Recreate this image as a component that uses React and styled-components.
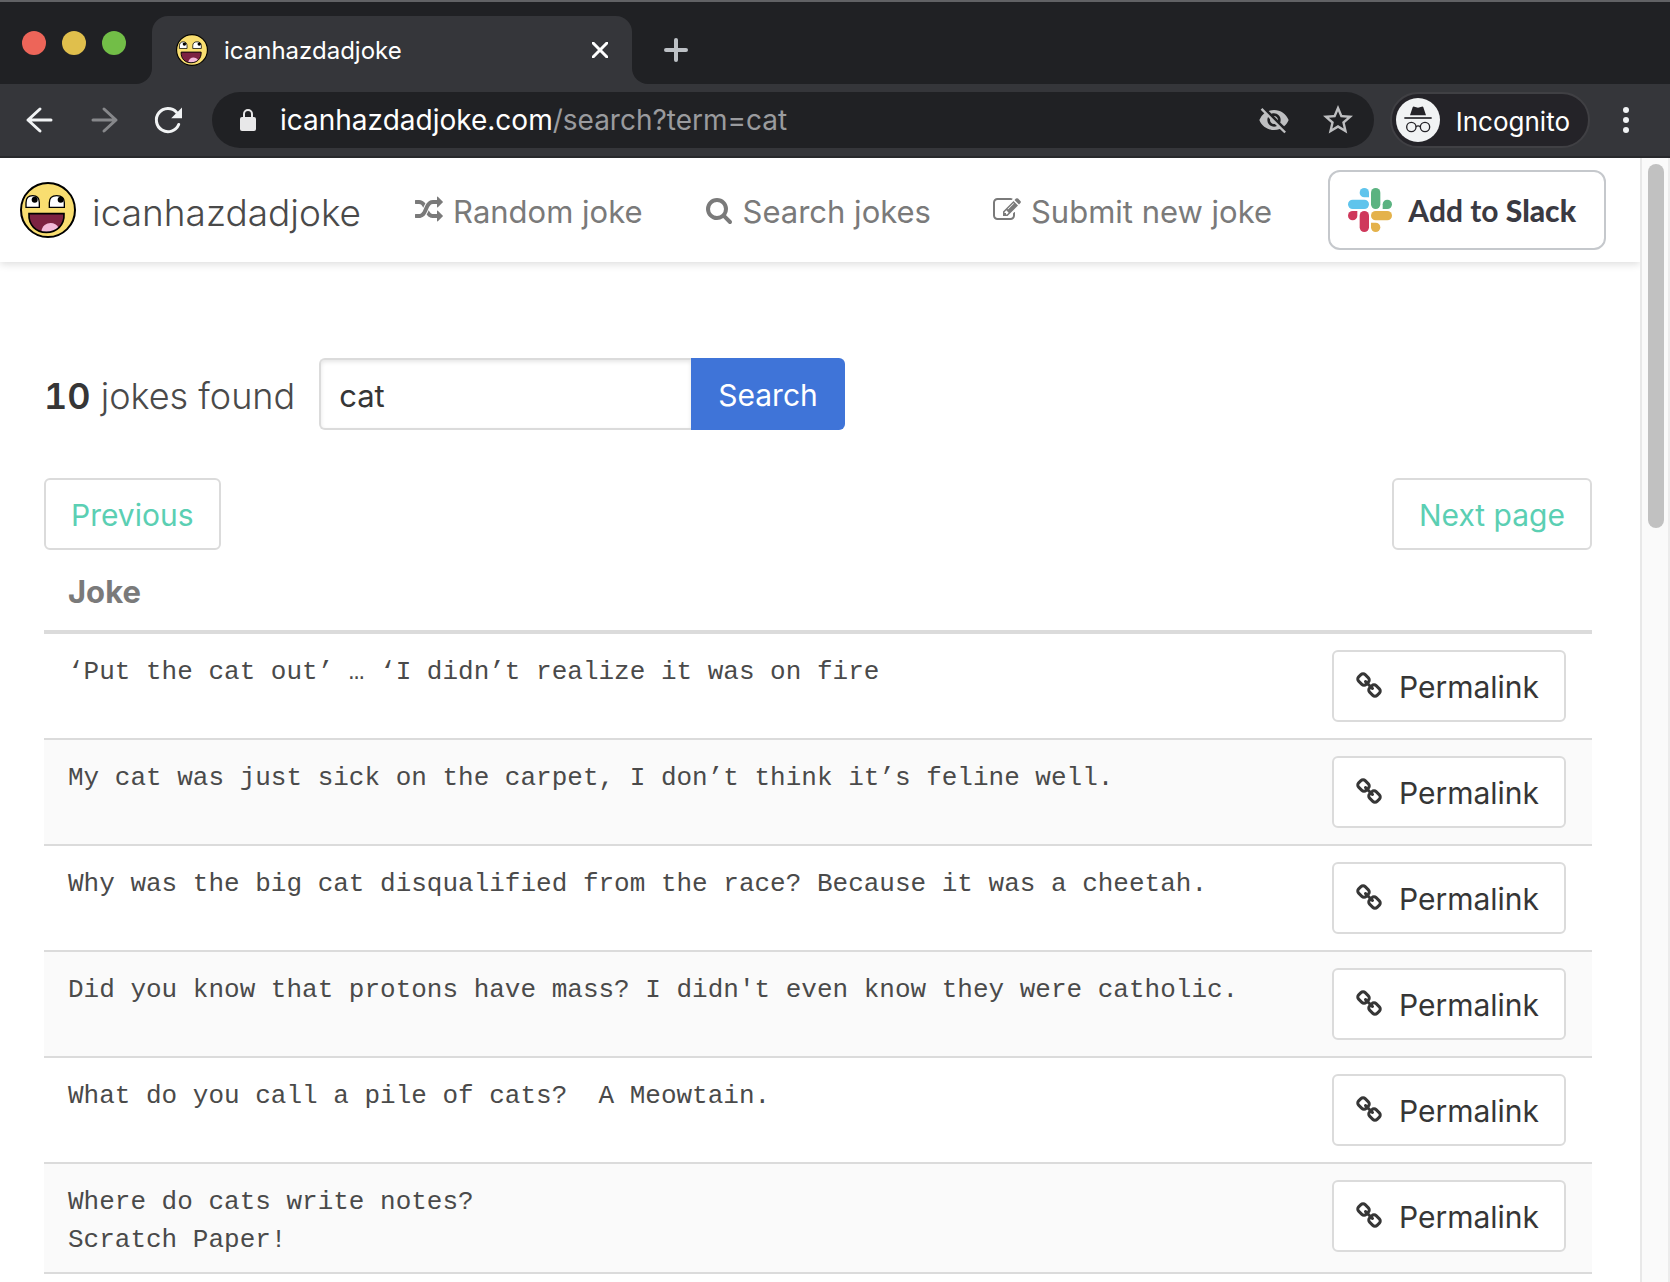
import React from "react";
import styled, { createGlobalStyle } from "styled-components";
import { MdStarBorder, MdVisibilityOff } from "react-icons/md";

const sans = `Inter, "Liberation Sans", sans-serif`;
const mono = `"Liberation Mono", monospace`;

const GlobalStyle = createGlobalStyle`
  *, *::before, *::after { box-sizing: border-box; }
  body { margin: 0; background: #fff; font-family: ${sans}; overflow: hidden; }
  a { text-decoration: none; color: inherit; }
  svg { display: block; flex: none; }
`;

const Window = styled.div`
  display: flex;
  flex-direction: column;
  height: 100vh;
  border-top: 2px solid #616265;
  overflow: hidden;
  background: #202124;
`;

/* ---------- tab strip ---------- */

const TabStrip = styled.div`
  display: flex;
  height: 82px;
  flex: none;
  background: #35363a;
`;

const StripBlock = styled.div`
  display: flex;
  align-items: center;
  background: #202124;
`;

const Lights = styled(StripBlock)`
  width: 152px;
  gap: 16px;
  padding: 0 0 0 22px;
  border-bottom-right-radius: 16px;
`;

const Light = styled.button`
  width: 24px;
  height: 24px;
  padding: 0;
  border: 0;
  border-radius: 50%;
  background: ${(p) => p.$color};
`;

const StripRest = styled(StripBlock)`
  flex: 1;
  padding: 14px 0 0 32px;
  border-bottom-left-radius: 16px;
`;

const TabSlot = styled.div`
  width: 480px;
  padding-top: 14px;
  background: #202124;
`;

const Tab = styled.div`
  display: flex;
  align-items: center;
  height: 68px;
  padding: 0 24px;
  border-radius: 16px 16px 0 0;
  background: #35363a;
  color: #fff;
`;

const TabTitle = styled.span`
  flex: 1;
  margin-left: 16px;
  font-size: 24px;
`;

const IconButton = styled.button`
  display: flex;
  align-items: center;
  justify-content: center;
  width: ${(p) => p.$size || 40}px;
  height: ${(p) => p.$size || 40}px;
  flex: none;
  padding: 0;
  border: 0;
  background: none;
  color: ${(p) => p.$color || "#f1f3f4"};
`;

/* ---------- toolbar ---------- */

const Toolbar = styled.div`
  display: flex;
  align-items: center;
  flex: none;
  height: 74px;
  padding: 0 24px 0 20px;
  border-bottom: 2px solid #28292c;
  background: #35363a;
`;

const History = styled.div`
  display: flex;
  gap: 24px;
  margin-right: 24px;
`;

const AddressBar = styled.div`
  display: flex;
  align-items: center;
  flex: 1;
  height: 56px;
  padding: 0 16px 0 24px;
  border-radius: 28px;
  background: #202124;
`;

const Url = styled.span`
  flex: 1;
  margin-left: 20px;
  font-size: 28px;
  color: #9a9b9e;
`;

const Host = styled.span`
  color: #fff;
`;

const AddressIcons = styled.div`
  display: flex;
  gap: 24px;
`;

const Incognito = styled.button`
  display: flex;
  align-items: center;
  gap: 16px;
  height: 56px;
  margin: 0 16px;
  padding: 0 18px 0 4px;
  border: 2px solid #404044;
  border-radius: 28px;
  background: #242328;
  color: #fff;
  font-family: ${sans};
  font-size: 26px;
`;

/* ---------- page ---------- */

const Viewport = styled.div`
  display: flex;
  flex: 1;
  min-height: 0;
  background: #fff;
`;

const Page = styled.div`
  flex: 1;
  min-width: 0;
  overflow: hidden;
`;

const Track = styled.div`
  width: 30px;
  flex: none;
  padding: 6px 4px 0 6px;
  border-left: 2px solid #e8e8e8;
  border-right: 2px solid #ececec;
  background: #fafafa;
`;

const Thumb = styled.div`
  width: 16px;
  height: 364px;
  border-radius: 8px;
  background: #c1c1c1;
`;

const Nav = styled.nav`
  display: flex;
  align-items: center;
  height: 104px;
  padding: 0 34px 0 20px;
  box-shadow: 0 2px 8px rgba(0, 0, 0, 0.14);
`;

const Brand = styled.a`
  display: flex;
  align-items: center;
  gap: 16px;
  margin-right: 54px;
  color: #4a4a4a;
  font-size: 37px;
  font-weight: 300;
`;

const BrandName = styled.span`
  padding-top: 4px;
`;

const NavLinks = styled.div`
  display: flex;
  gap: 62px;
`;

const NavLink = styled.a`
  display: flex;
  align-items: center;
  gap: 10px;
  color: #7a7a7a;
  font-size: 31px;
  white-space: nowrap;
`;

const Label = styled.span`
  padding-top: 2px;
`;

const SlackButton = styled.a`
  display: flex;
  align-items: center;
  gap: 16px;
  height: 80px;
  margin-left: auto;
  padding: 0 28px 0 18px;
  border: 2px solid #c5c8cc;
  border-radius: 12px;
  color: #3a3a42;
  font-family: Lato, ${sans};
  font-size: 30px;
  font-weight: 700;
  white-space: nowrap;

  strong { font-weight: 900; }
`;

const Main = styled.main`
  padding: 96px 48px 0 44px;
`;

const SearchRow = styled.form`
  display: flex;
  align-items: center;
  margin-bottom: 48px;
`;

const Found = styled.h1`
  margin: 0 24px 0 0;
  padding-top: 4px;
  color: #4a4a4a;
  font-size: 36px;
  font-weight: 300;
  white-space: nowrap;

  strong {
    color: #363636;
    font-weight: 600;
    font-variant-numeric: tabular-nums;
  }
`;

const SearchInput = styled.input`
  width: 372px;
  height: 72px;
  padding: 2px 18px 0;
  border: 2px solid #dbdbdb;
  border-right: 0;
  border-radius: 6px 0 0 6px;
  box-shadow: inset 0 2px 4px rgba(10, 10, 10, 0.1);
  color: #363636;
  font-family: ${sans};
  font-size: 31px;
  outline: 0;
`;

const SearchSubmit = styled.button`
  height: 72px;
  padding: 2px 27px 0;
  border: 0;
  border-radius: 0 6px 6px 0;
  background: #3f74d8;
  color: #fff;
  font-family: ${sans};
  font-size: 30px;
`;

const Pagination = styled.div`
  display: flex;
  justify-content: space-between;
`;

const OutlineLink = styled.a`
  display: inline-flex;
  align-items: center;
  gap: 16px;
  height: 72px;
  padding: 0 25px 0 ${(p) => p.$padLeft || 25}px;
  border: 2px solid #dbdbdb;
  border-radius: 6px;
  background: #fff;
  color: ${(p) => p.$color || "#363636"};
  font-size: 30px;
  white-space: nowrap;
  vertical-align: top;
`;

const Jokes = styled.table`
  width: 100%;
  border-collapse: separate;
  border-spacing: 0;
`;

const HeadCell = styled.th`
  height: 84px;
  padding: 2px 24px 0;
  border-bottom: 4px solid #dbdbdb;
  color: #7a7a7a;
  font-size: 31px;
  font-weight: 700;
  text-align: left;
`;

const Row = styled.tr`
  background: ${(p) => (p.$striped ? "#fafafa" : "#fff")};
`;

const Cell = styled.td`
  padding: 19px 24px 13px;
  border-bottom: 2px solid #dbdbdb;
  vertical-align: top;
`;

const ActionCell = styled(Cell)`
  padding: 16px 26px 16px 0;
  text-align: right;
`;

const JokeText = styled.pre`
  margin: 0;
  color: #4a4a4a;
  font-family: ${mono};
  font-size: 26px;
  line-height: 38px;
  white-space: pre-wrap;
`;

/* ---------- icons ---------- */

const FaceIcon = ({ size }) => (
  <svg width={size} height={size} viewBox="0 0 168 168" aria-hidden="true">
    <circle cx="84" cy="84" r="81" fill="#f9de70" stroke="#000" strokeWidth="6" />
    <path d="M18 76V62C18 48 26 41 38 41S58 48 58 62V76Z" fill="#fff" stroke="#000" strokeWidth="4" />
    <path d="M88 76V62C88 48 96 41 110 41S133 48 133 62V76Z" fill="#fff" stroke="#000" strokeWidth="4" />
    <circle cx="44" cy="53" r="9" />
    <circle cx="122" cy="53" r="9" />
    <path d="M27 95H132C134 130 110 151 79 151S25 130 27 95Z" fill="#7c2242" />
    <path d="M64 149C68 118 106 116 116 138Q102 151 79 151Z" fill="#f3b9da" />
    <path d="M27 95H132C134 130 110 151 79 151S25 130 27 95Z" fill="none" stroke="#000" strokeWidth="5" />
  </svg>
);

const glyphs = {
  random:
    "M666 481q-60 92-137 273-22-45-37-72.5t-40.5-63.5-51-56.5-63-35-81.5-14.5h-224q-14 0-23-9t-9-23v-192q0-14 9-23t23-9h224q250 0 410 225zm1126 799q0 14-9 23l-320 320q-9 9-23 9-13 0-22.5-9.5t-9.5-22.5v-192q-32 0-85 .5t-81 1-73-1-71-5-64-10.5-63-18.5-58-28.5-59-40-55-53.5-56-69.5q59-93 136-273 22 45 37 72.5t40.5 63.5 51 56.5 63 35 81.5 14.5h256v-192q0-14 9-23t23-9q12 0 24 10l319 319q9 9 9 23zm0-896q0 14-9 23l-320 320q-9 9-23 9-13 0-22.5-9.5t-9.5-22.5v-192h-256q-48 0-87 15t-69 45-51 61.5-45 77.5q-32 62-78 171-29 66-49.5 111t-54 105-64 100-74 83-90 68.5-106.5 42-128 16.5h-224q-14 0-23-9t-9-23v-192q0-14 9-23t23-9h224q48 0 87-15t69-45 51-61.5 45-77.5q32-62 78-171 29-66 49.5-111t54-105 64-100 74-83 90-68.5 106.5-42 128-16.5h256v-192q0-14 9-23t23-9q12 0 24 10l319 319q9 9 9 23z",
  search:
    "M1216 832q0-185-131.5-316.5t-316.5-131.5-316.5 131.5-131.5 316.5 131.5 316.5 316.5 131.5 316.5-131.5 131.5-316.5zm512 832q0 52-38 90t-90 38q-54 0-90-38l-343-342q-179 124-399 124-143 0-273.5-55.5t-225-150-150-225-55.5-273.5 55.5-273.5 150-225 225-150 273.5-55.5 273.5 55.5 225 150 150 225 55.5 273.5q0 220-124 399l343 343q37 37 37 90z",
  edit:
    "M888 1184l116-116-152-152-116 116v56h96v96h56zm440-720q-16-16-33 1l-350 350q-17 17-1 33t33-1l350-350q17-17 1-33zm80 594v190q0 119-84.5 203.5t-203.5 84.5h-832q-119 0-203.5-84.5t-84.5-203.5v-832q0-119 84.5-203.5t203.5-84.5h832q63 0 117 25 15 7 18 23 3 17-9 29l-49 49q-14 14-32 8-23-6-45-6h-832q-66 0-113 47t-47 113v832q0 66 47 113t113 47h832q66 0 113-47t47-113v-126q0-13 9-22l64-64q15-15 35-7t20 29zm-96-738l288 288-672 672h-288v-288zm444 132l-92 92-288-288 92-92q28-28 68-28t68 28l152 152q28 28 28 68t-28 68z",
  chain:
    "M1520 1216q0-40-28-68l-208-208q-28-28-68-28-42 0-72 32 3 3 19 18.5t21.5 21.5 15 19 13 25.5 3.5 27.5q0 40-28 68t-68 28q-15 0-27.5-3.5t-25.5-13-19-15-21.5-21.5-18.5-19q-33 31-33 73 0 40 28 68l206 207q27 27 68 27 40 0 68-26l147-146q28-28 28-67zm-703-705q0-40-28-68l-206-207q-28-28-68-28-39 0-68 27l-147 146q-28 28-28 67 0 40 28 68l208 208q27 27 68 27 42 0 72-31-3-3-19-18.5t-21.5-21.5-15-19-13-25.5-3.5-27.5q0-40 28-68t68-28q15 0 27.5 3.5t25.5 13 19 15 21.5 21.5 18.5 19q33-31 33-73zm895 705q0 120-85 203l-147 146q-83 83-203 83-121 0-204-85l-206-207q-83-83-83-203 0-123 88-209l-88-88q-86 88-208 88-120 0-204-84l-208-208q-84-84-84-204t85-203l147-146q83-83 203-83 121 0 204 85l206 207q83 83 83 203 0 123-88 209l88 88q86-88 208-88 120 0 204 84l208 208q84 84 84 204z",
};

const Glyph = ({ name }) => (
  <svg width="28" height="28" viewBox="0 0 1792 1792" fill="currentColor" aria-hidden="true">
    <path d={glyphs[name]} />
  </svg>
);

const Lines = ({ size, d, width = 3 }) => (
  <svg
    width={size}
    height={size}
    viewBox={`0 0 ${size} ${size}`}
    fill="none"
    stroke="currentColor"
    strokeWidth={width}
    strokeLinecap="round"
    strokeLinejoin="round"
    aria-hidden="true"
  >
    <path d={d} />
  </svg>
);

const ReloadIcon = () => (
  <svg width="40" height="40" viewBox="0 0 40 40" aria-hidden="true">
    <path
      d="M30.7 24.5A11.6 11.6 0 1 1 28.5 12.2"
      fill="none"
      stroke="currentColor"
      strokeWidth="3"
      strokeLinecap="round"
    />
    <path d="M34 7.5V18.3H23.2Z" fill="currentColor" />
  </svg>
);

const LockIcon = () => (
  <svg width="24" height="24" viewBox="0 0 24 24" aria-hidden="true">
    <rect x="4" y="9" width="16" height="14" rx="2" fill="#e8e8e9" />
    <path d="M8 9V6a4 4 0 0 1 8 0v3" fill="none" stroke="#e8e8e9" strokeWidth="2" />
  </svg>
);

const IncognitoIcon = () => (
  <svg width="44" height="44" viewBox="0 0 132 132" aria-hidden="true">
    <circle cx="66" cy="66" r="66" fill="#f1f3f4" />
    <path d="M42 52L50 28Q51 25 55 26L66 29L77 26Q81 25 82 28L90 52Z" fill="#242328" />
    <path d="M25 60H107" stroke="#242328" strokeWidth="5" />
    <g fill="none" stroke="#242328" strokeWidth="4">
      <circle cx="46" cy="87" r="14" />
      <circle cx="87" cy="87" r="14" />
      <path d="M60 86Q66 81 73 86" />
    </g>
  </svg>
);

const DotsIcon = () => (
  <svg width="8" height="28" viewBox="0 0 8 28" fill="currentColor" aria-hidden="true">
    <circle cx="4" cy="4" r="3" />
    <circle cx="4" cy="14" r="3" />
    <circle cx="4" cy="24" r="3" />
  </svg>
);

const SlackIcon = () => (
  <svg width="44" height="44" viewBox="0 0 132 132" aria-hidden="true">
    <g fill="#5fc4ec">
      <path d="M63 28H49A14 14 0 1 1 63 14Z" />
      <rect x="0" y="35" width="63" height="28" rx="14" />
    </g>
    <g fill="#5bb381">
      <rect x="69" y="0" width="28" height="63" rx="14" />
      <path d="M104 63V49A14 14 0 1 1 118 63Z" />
    </g>
    <g fill="#e4b24b">
      <rect x="69" y="69" width="63" height="28" rx="14" />
      <path d="M69 104H83A14 14 0 1 1 69 118Z" />
    </g>
    <g fill="#cf385b">
      <path d="M28 69V83A14 14 0 1 1 14 69Z" />
      <rect x="35" y="69" width="28" height="63" rx="14" />
    </g>
  </svg>
);

/* ---------- data ---------- */

const jokes = [
  "‘Put the cat out’ … ‘I didn’t realize it was on fire",
  "My cat was just sick on the carpet, I don’t think it’s feline well.",
  "Why was the big cat disqualified from the race? Because it was a cheetah.",
  "Did you know that protons have mass? I didn't even know they were catholic.",
  "What do you call a pile of cats?  A Meowtain.",
  "Where do cats write notes?\nScratch Paper!",
];

export default function App() {
  return (
    <Window>
      <GlobalStyle />
      <TabStrip>
        <Lights>
          <Light $color="#ed6559" aria-label="Close window" />
          <Light $color="#e0bf4c" aria-label="Minimize window" />
          <Light $color="#72be47" aria-label="Zoom window" />
        </Lights>
        <TabSlot>
          <Tab>
            <FaceIcon size={32} />
            <TabTitle>icanhazdadjoke</TabTitle>
            <IconButton $size={16} $color="#fff" aria-label="Close tab">
              <Lines size={16} d="M1 1L15 15M15 1L1 15" />
            </IconButton>
          </Tab>
        </TabSlot>
        <StripRest>
          <IconButton $size={24} $color="#bdc1c6" aria-label="New tab">
            <Lines size={24} width={4} d="M12 2V22M2 12H22" />
          </IconButton>
        </StripRest>
      </TabStrip>

      <Toolbar>
        <History>
          <IconButton aria-label="Back">
            <Lines size={40} d="M31 20H8M20 9L8 20L20 31" />
          </IconButton>
          <IconButton $color="#87888b" aria-label="Forward">
            <Lines size={40} d="M9 20H32M20 9L32 20L20 31" />
          </IconButton>
          <IconButton aria-label="Reload">
            <ReloadIcon />
          </IconButton>
        </History>
        <AddressBar>
          <LockIcon />
          <Url>
            <Host>icanhazdadjoke.com</Host>/search?term=cat
          </Url>
          <AddressIcons>
            <IconButton $color="#bebfc1" aria-label="Third-party cookies blocked">
              <MdVisibilityOff size={32} />
            </IconButton>
            <IconButton $color="#bebfc1" aria-label="Bookmark this page">
              <MdStarBorder size={36} />
            </IconButton>
          </AddressIcons>
        </AddressBar>
        <Incognito>
          <IncognitoIcon />
          <Label>Incognito</Label>
        </Incognito>
        <IconButton aria-label="Menu">
          <DotsIcon />
        </IconButton>
      </Toolbar>

      <Viewport>
        <Page>
          <Nav>
            <Brand href="#home">
              <FaceIcon size={56} />
              <BrandName>icanhazdadjoke</BrandName>
            </Brand>
            <NavLinks>
              <NavLink href="#random">
                <Glyph name="random" />
                <Label>Random joke</Label>
              </NavLink>
              <NavLink href="#search">
                <Glyph name="search" />
                <Label>Search jokes</Label>
              </NavLink>
              <NavLink href="#submit">
                <Glyph name="edit" />
                <Label>Submit new joke</Label>
              </NavLink>
            </NavLinks>
            <SlackButton href="#slack">
              <SlackIcon />
              <span>
                Add to <strong>Slack</strong>
              </span>
            </SlackButton>
          </Nav>

          <Main>
            <SearchRow onSubmit={(e) => e.preventDefault()}>
              <Found>
                <strong>10</strong> jokes found
              </Found>
              <SearchInput name="term" aria-label="Search term" defaultValue="cat" />
              <SearchSubmit type="submit">Search</SearchSubmit>
            </SearchRow>

            <Pagination>
              <OutlineLink href="#previous" $color="#5bcfb3">
                <Label>Previous</Label>
              </OutlineLink>
              <OutlineLink href="#next" $color="#5bcfb3">
                <Label>Next page</Label>
              </OutlineLink>
            </Pagination>

            <Jokes>
              <thead>
                <tr>
                  <HeadCell colSpan={2} scope="col">
                    Joke
                  </HeadCell>
                </tr>
              </thead>
              <tbody>
                {jokes.map((joke, i) => (
                  <Row key={joke} $striped={i % 2 === 1}>
                    <Cell>
                      <JokeText>{joke}</JokeText>
                    </Cell>
                    <ActionCell>
                      <OutlineLink href={`#joke-${i + 1}`} $padLeft={21}>
                        <Glyph name="chain" />
                        <Label>Permalink</Label>
                      </OutlineLink>
                    </ActionCell>
                  </Row>
                ))}
              </tbody>
            </Jokes>
          </Main>
        </Page>
        <Track>
          <Thumb />
        </Track>
      </Viewport>
    </Window>
  );
}
